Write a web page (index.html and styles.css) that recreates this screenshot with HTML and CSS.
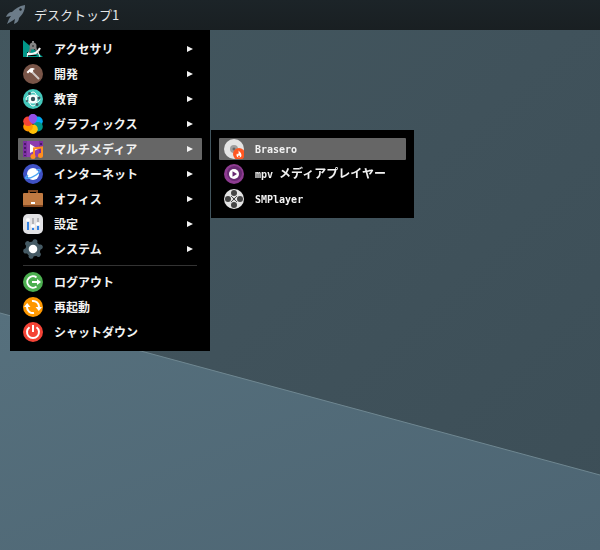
FILE: index.html
```
<!DOCTYPE html>
<html lang="ja">
<head>
    <meta charset="utf-8">
    <meta name="viewport" content="width=device-width, initial-scale=1.0">
    <title>デスクトップ1</title>
    <link rel="stylesheet" href="styles.css">
</head>
<body>
    <svg class="wallpaper" viewBox="0 0 600 550" preserveAspectRatio="none" aria-hidden="true">
        <defs>
            <linearGradient id="upper" x1="0" y1="0" x2="1" y2="1">
                <stop offset="0" stop-color="#43575f"/>
                <stop offset="0.5" stop-color="#40525b"/>
                <stop offset="1" stop-color="#3c4e57"/>
            </linearGradient>
            <linearGradient id="lower" x1="0" y1="0" x2="1" y2="1">
                <stop offset="0" stop-color="#56707d"/>
                <stop offset="1" stop-color="#4d6573"/>
            </linearGradient>
        </defs>
        <rect width="600" height="550" fill="url(#upper)"/>
        <path d="M0 313L600 475V550H0z" fill="url(#lower)"/>
        <path d="M0 313L600 475" stroke="#6f8791" stroke-width="1"/>
    </svg>

    <header class="panel">
        <button class="launcher" type="button" aria-label="メニュー">
            <svg class="icon" viewBox="0 0 20 20">
                <path d="M19 0C13 1 9 4 6 7C3 7 1 9 0 12L5 11L3 14L1 19L6 16L9 14L8 19C11 18 13 16 13 13C16 10 19 6 19 0z" fill="#6c7c89"/>
                <circle cx="14.500" cy="4.500" r="1.200" fill="#1c2327"/>
            </svg>
        </button>
        <span class="desktop_name">デスクトップ1</span>
    </header>

    <nav class="menu" aria-label="アプリケーション">
        <ul class="menu_list">
            <li>
                <button class="item" type="button">
                    <svg class="icon" viewBox="0 0 20 20">
                        <path d="M0 1L20 18H0z" fill="#009688"/>
                        <path d="M4 13V17H15z" fill="#000"/>
                        <path d="M8 8L6 15M12 8L15 15" stroke="#757575" stroke-width="2"/>
                        <path d="M4 15Q14 16 17 9" stroke="#f5f5f5" stroke-width="2" fill="none"/>
                        <path d="M6 13L4 18M15 13L17 18" stroke="#f5f5f5" stroke-width="1"/>
                        <rect x="9" y="2" width="2" height="4" fill="#858585"/>
                        <circle cx="10" cy="7" r="3.500" fill="#858585"/>
                        <circle cx="10" cy="7" r="1" fill="#424242"/>
                    </svg>
                    <span class="label">アクセサリ</span><span class="arrow"></span>
                </button>
            </li>
            <li>
                <button class="item" type="button">
                    <svg class="icon" viewBox="0 0 20 20">
                        <circle cx="10" cy="10" r="10" fill="#795548"/>
                        <path d="M8 7L15.500 14.500" stroke="#d0c8c5" stroke-width="2" stroke-linecap="round"/>
                        <path d="M3.500 8L7.500 4.300Q10 3.500 12 5L10 6L10.300 7.500L8 9L6.800 7.800L5 9.500z" fill="#fff"/>
                    </svg>
                    <span class="label">開発</span><span class="arrow"></span>
                </button>
            </li>
            <li>
                <button class="item" type="button">
                    <svg class="icon" viewBox="0 0 20 20">
                        <circle cx="10" cy="10" r="10" fill="#45c8bc"/>
                        <g fill="none" stroke="#fff">
                            <ellipse cx="10" cy="10" rx="7" ry="4"/>
                            <ellipse cx="10" cy="10" rx="4" ry="7"/>
                        </g>
                        <circle cx="10" cy="10" r="4" fill="#fff"/>
                        <g fill="#37545c">
                            <circle cx="10" cy="10" r="2.200"/>
                            <circle cx="6.500" cy="4.500" r="1.500"/>
                            <circle cx="16" cy="9" r="1.500"/>
                            <circle cx="4" cy="12" r="1"/>
                            <circle cx="14" cy="15.500" r="1.500"/>
                        </g>
                    </svg>
                    <span class="label">教育</span><span class="arrow"></span>
                </button>
            </li>
            <li>
                <button class="item" type="button">
                    <svg class="icon" viewBox="0 0 20 20">
                        <circle cx="10" cy="4.800" r="4.800" fill="#9450e8"/>
                        <circle cx="15" cy="7.300" r="4.800" fill="#03a9f4"/>
                        <circle cx="15" cy="12.700" r="4.800" fill="#009688"/>
                        <circle cx="10" cy="15.200" r="4.800" fill="#ffc107"/>
                        <circle cx="5" cy="12.700" r="4.800" fill="#ff9800"/>
                        <circle cx="5" cy="7.300" r="4.800" fill="#f44336"/>
                        <path d="M10 10Q6 8 5.500 4Q6.500 0 10 0Q14 1 14 5Q13 9 10 10z" fill="#9450e8"/>
                    </svg>
                    <span class="label">グラフィックス</span><span class="arrow"></span>
                </button>
            </li>
            <li class="has_submenu">
                <button class="item active" type="button" aria-expanded="true">
                    <svg class="icon" viewBox="0 0 20 20">
                        <rect y="2" width="20" height="16" fill="#8e3eb0"/>
                        <path d="M0 2h4v16H0zM16 2h4v16h-4z" fill="#7b2fa0"/>
                        <path d="M1 4h2v2H1zM1 8h2v2H1zM1 12h2v2H1zM1 16h2v1H1zM17 4h2v2h-2zM17 8h2v2h-2z" fill="#4a176b"/>
                        <path d="M7 5L15 10L7 14z" fill="#fff"/>
                        <path d="M11 17V9.500L19 8.500V17" fill="none" stroke="#ff8f1f" stroke-width="2"/>
                        <circle cx="10" cy="17.500" r="2.500" fill="#ff8f1f"/>
                        <circle cx="17.500" cy="16.500" r="2.500" fill="#ff8f1f"/>
                    </svg>
                    <span class="label">マルチメディア</span><span class="arrow"></span>
                </button>
                <ul class="menu_list submenu">
                    <li>
                        <button class="item active" type="button">
                            <svg class="icon" viewBox="0 0 20 20">
                                <circle cx="10" cy="10" r="10" fill="#e4e4e4"/>
                                <circle cx="10" cy="10" r="4" fill="#9e9e9e"/>
                                <circle cx="10" cy="10" r="1.500" fill="#666"/>
                                <circle cx="15" cy="15" r="6" fill="#ff5722"/>
                                <path d="M14.500 11.500Q17.500 14 17.500 16Q17.500 18.500 15 18.500Q12.500 18.500 12.500 16Q12.500 15 13 14.500L14 15.500Q15 13.500 14.500 11.500z" fill="#fff"/>
                                <circle cx="15" cy="17.500" r="1" fill="#ff5722"/>
                            </svg>
                            <span class="label"><span class="latin">Brasero</span></span>
                        </button>
                    </li>
                    <li>
                        <button class="item" type="button">
                            <svg class="icon" viewBox="0 0 20 20">
                                <circle cx="10" cy="10" r="10" fill="#8e3b91"/>
                                <circle cx="10.500" cy="9.500" r="7.500" fill="#682b72"/>
                                <circle cx="10" cy="10" r="5" fill="#fff"/>
                                <path d="M8.500 7.200L13 10L8.500 12.800z" fill="#682b72"/>
                            </svg>
                            <span class="label"><span class="latin">mpv </span>メディアプレイヤー</span>
                        </button>
                    </li>
                    <li>
                        <button class="item" type="button">
                            <svg class="icon" viewBox="0 0 20 20">
                                <circle cx="10" cy="10" r="10" fill="#e4e4e4"/>
                                <g fill="#444">
                                    <circle cx="10" cy="4" r="3"/>
                                    <circle cx="16" cy="10" r="3"/>
                                    <circle cx="10" cy="16" r="3"/>
                                    <circle cx="4" cy="10" r="3"/>
                                </g>
                                <path d="M7 7L13 13M13 7L7 13" stroke="#555" stroke-width="1"/>
                                <circle cx="10" cy="10" r="1.200" fill="#444"/>
                            </svg>
                            <span class="label"><span class="latin">SMPlayer</span></span>
                        </button>
                    </li>
                </ul>
            </li>
            <li>
                <button class="item" type="button">
                    <svg class="icon" viewBox="0 0 20 20">
                        <circle cx="10" cy="10" r="10" fill="#3f51c5"/>
                        <circle cx="10" cy="10" r="6" fill="#fff"/>
                        <path d="M5 11Q1 14.500 3.500 14.500Q8 14.500 13 11Q18 7.500 17 5.800Q16 5 13.500 6" fill="none" stroke="#4aa5f5" stroke-width="1.500"/>
                    </svg>
                    <span class="label">インターネット</span><span class="arrow"></span>
                </button>
            </li>
            <li>
                <button class="item" type="button">
                    <svg class="icon" viewBox="0 0 20 20">
                        <path d="M6 5V2H14V5" fill="none" stroke="#834a22" stroke-width="2"/>
                        <rect y="4" width="20" height="14" rx="1" fill="#7d4520"/>
                        <path d="M1 4H19L20 5V16H0V5z" fill="#c07a42"/>
                        <rect x="8" y="13" width="4" height="2" fill="#fff"/>
                    </svg>
                    <span class="label">オフィス</span><span class="arrow"></span>
                </button>
            </li>
            <li>
                <button class="item" type="button">
                    <svg class="icon" viewBox="0 0 20 20">
                        <rect width="20" height="20" rx="5" fill="#e2e2e5"/>
                        <path d="M5 7V16M10 13V16M15 11V16" stroke="#3584e4" stroke-width="2"/>
                        <path d="M10 4V11M15 4V9" stroke="#b4b4b8" stroke-width="2"/>
                        <circle cx="5" cy="6" r="2" fill="#fff"/>
                        <circle cx="10" cy="12" r="2" fill="#fff"/>
                        <circle cx="15" cy="10" r="2" fill="#fff"/>
                    </svg>
                    <span class="label">設定</span><span class="arrow"></span>
                </button>
            </li>
            <li>
                <button class="item" type="button">
                    <svg class="icon" viewBox="0 0 20 20">
                        <g stroke="#455a64" stroke-width="5" stroke-linecap="round" transform="rotate(15 10 10)">
                            <path d="M10 2.500V17.500M3.500 6.200L16.500 13.800M3.500 13.800L16.500 6.200"/>
                        </g>
                        <circle cx="10" cy="10" r="7.500" fill="#455a64"/>
                        <circle cx="10" cy="10" r="4.300" fill="#fff"/>
                    </svg>
                    <span class="label">システム</span><span class="arrow"></span>
                </button>
            </li>
        </ul>
        <hr class="separator">
        <ul class="menu_list">
            <li>
                <button class="item" type="button">
                    <svg class="icon" viewBox="0 0 20 20">
                        <circle cx="10" cy="10" r="10" fill="#4caf50"/>
                        <path d="M13.500 5.500A5.700 5.700 0 1 0 13.500 14.500" fill="none" stroke="#fff" stroke-width="2"/>
                        <path d="M9 10H15" stroke="#fff" stroke-width="2"/>
                        <path d="M14 7L18 10L14 13z" fill="#fff"/>
                    </svg>
                    <span class="label">ログアウト</span>
                </button>
            </li>
            <li>
                <button class="item" type="button">
                    <svg class="icon" viewBox="0 0 20 20">
                        <circle cx="10" cy="10" r="10" fill="#ff9800"/>
                        <path d="M9 4A6 6 0 0 1 16 10M11 16A6 6 0 0 1 4 10" fill="none" stroke="#fff" stroke-width="2"/>
                        <path d="M12.500 10H19L15.800 14zM1 10H7.500L4.200 6z" fill="#fff"/>
                    </svg>
                    <span class="label">再起動</span>
                </button>
            </li>
            <li>
                <button class="item" type="button">
                    <svg class="icon" viewBox="0 0 20 20">
                        <circle cx="10" cy="10" r="10" fill="#f44336"/>
                        <path d="M6.500 5.200A6 6 0 1 0 13.500 5.200M10 3V10" fill="none" stroke="#fff" stroke-width="2"/>
                    </svg>
                    <span class="label">シャットダウン</span>
                </button>
            </li>
        </ul>
    </nav>
</body>
</html>
```
FILE: styles.css
```
* {
    box-sizing: border-box;
}
body {
    margin: 0;
    min-height: 100vh;
    background-color: #40525c;
    color: #fff;
    font-family: "Noto Sans CJK JP", sans-serif;
}
ul {
    margin: 0;
    padding: 0;
    list-style: none;
}
.wallpaper {
    position: fixed;
    inset: 0;
    width: 100%;
    height: 100%;
    z-index: -1;
}
.icon {
    display: block;
    flex: none;
    width: 20px;
    height: 20px;
}

/* top panel */
.panel {
    display: flex;
    align-items: center;
    gap: 8px;
    height: 30px;
    padding: 0 6px;
    background: linear-gradient(#1c2428, #191f22);
}
.launcher {
    padding: 0;
    border: 0;
    background: none;
}
.desktop_name {
    color: #e4e6e7;
    font-size: 13px;
    line-height: 20px;
}

/* menus */
.menu {
    width: 200px;
    margin-left: 10px;
    padding: 8px;
    background-color: #000;
}
.menu_list {
    display: grid;
    gap: 3px;
}
.item {
    display: flex;
    align-items: center;
    gap: 11px;
    width: 100%;
    height: 22px;
    padding: 0 9px 0 5px;
    border: 0;
    background: none;
    color: #f2f2f2;
    font-family: inherit;
    font-size: 12px;
    font-weight: bold;
    line-height: 20px;
    text-align: left;
    white-space: nowrap;
}
.item:hover,
.item.active {
    background-color: #666;
    border-radius: 1px;
}
.label {
    flex: 1;
}
.latin {
    font-family: "DejaVu Sans Mono", monospace;
    font-size: 10px;
    white-space: pre;
}
.arrow {
    border: 3px solid transparent;
    border-left: 6px solid #f2f2f2;
    border-right: 0;
}
.separator {
    height: 1px;
    margin: 5px;
    border: 0;
    background-color: #333;
}
.has_submenu {
    position: relative;
}
.submenu {
    position: absolute;
    top: -8px;
    left: calc(100% + 9px);
    min-width: 203px;
    padding: 8px;
    background-color: #000;
}
```
